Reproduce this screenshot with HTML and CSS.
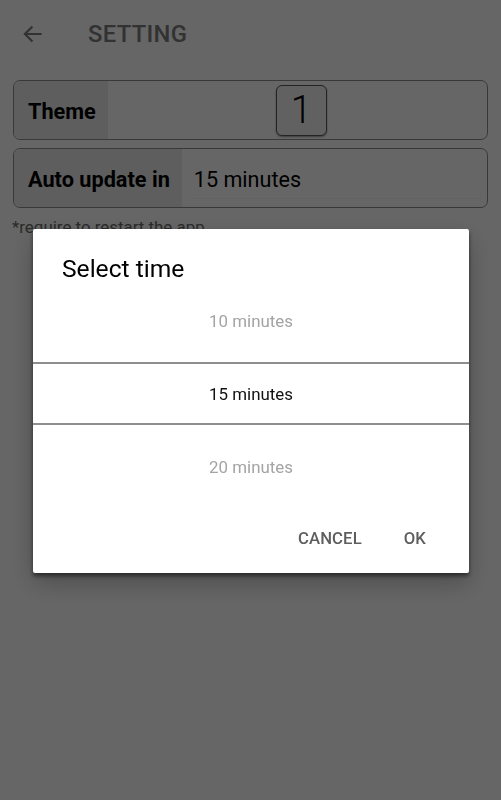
FILE: index.html
```html
<!DOCTYPE html>
<html lang="en">
    <head>
        <title>Setting</title>
        <meta charset="UTF-8">
        <meta name="viewport" content="width=device-width, initial-scale=1">
        <link rel="stylesheet" href="styles.css">
    </head>
    <body>

        <div class="screen">
            <header class="toolbar">
                <svg class="back" viewBox="0 0 24 24" width="24" height="24">
                    <path d="M20 12H4.5M11.5 5l-7 7 7 7" fill="none" stroke="currentColor" stroke-width="2"/>
                </svg>
                <h1>SETTING</h1>
            </header>

            <div class="row">
                <div class="label">Theme</div>
                <div class="value value-center">
                    <button class="theme-btn">1</button>
                </div>
            </div>

            <div class="row">
                <div class="label">Auto update in</div>
                <div class="value"><span class="field">15 minutes</span></div>
            </div>

            <p class="note">*require to restart the app</p>
        </div>

        <!-- dim layer + picker dialog -->
        <div class="scrim">
            <div class="dialog">
                <h2>Select time</h2>
                <div class="picker">
                    <div class="item">10 minutes</div>
                    <div class="item selected">15 minutes</div>
                    <div class="item">20 minutes</div>
                </div>
                <div class="actions">
                    <button>CANCEL</button>
                    <button>OK</button>
                </div>
            </div>
        </div>

    </body>
</html>
```

FILE: styles.css
```css
html {
    box-sizing: border-box;
}
*, *::before, *::after {
    box-sizing: inherit;
}
body {
    margin: 0;
    width: 501px;
    height: 800px;
    font-family: Roboto, "Noto Sans", sans-serif;
    background: #fff;
    overflow: hidden;
}
.screen {
    padding: 0 13px 0 13px;
}
.toolbar {
    height: 68px;
    display: flex;
    align-items: center;
    margin: 0 -13px 12px;
    padding-left: 20px;
    color: #7e7e7e;
}
    .toolbar .back {
        width: 26px;
        height: 26px;
        margin-right: 42px;
        margin-top: -1px;
    }
    .toolbar h1 {
        margin: 0;
        font-size: 23.8px;
        font-weight: 500;
        letter-spacing: .3px;
    }

.row {
    height: 60px;
    display: flex;
    border: 1px solid #8e8e8e;
    border-radius: 7px;
    overflow: hidden;
    margin-bottom: 8px;
}
    .row .label {
        display: flex;
        align-items: center;
        padding: 2px 12px 0 14px;
        background: #ececec;
        font-size: 21.7px;
        font-weight: 700;
        color: #000;
    }
    .row .value {
        flex: 1;
        display: flex;
        align-items: center;
        padding: 0 6px 0 12px;
    }
    .row .value-center {
        justify-content: center;
        padding: 0 0 0 8px;
    }
    .row .field {
        flex: 1;
        font-size: 21.6px;
        color: #000;
        padding-top: 2px;
        padding-bottom: 6px;
        margin-top: 7px;
        border-bottom: 1px solid #f4f4f4;
    }
.theme-btn {
    width: 51px;
    height: 51px;
    padding: 0;
    border: 1.5px solid #5a5a5a;
    border-radius: 6px;
    background: #f2f2f2;
    font-family: Roboto, sans-serif;
    font-size: 38px;
    font-weight: 300;
    color: #000;
    box-shadow: 0 1px 2px rgba(0, 0, 0, .4);
}
.note {
    margin: 9px 0 0 -1px;
    font-size: 16.9px;
    color: #6b6b6b;
}

.scrim {
    position: fixed;
    inset: 0;
    background: rgba(0, 0, 0, .6);
}
.dialog {
    position: absolute;
    top: 229px;
    left: 33px;
    width: 436px;
    height: 344px;
    background: #fff;
    border-radius: 2px;
    box-shadow: 0 3px 4px rgba(0, 0, 0, .5), 0 10px 24px rgba(0, 0, 0, .25);
    display: flex;
    flex-direction: column;
}
    .dialog h2 {
        margin: 0;
        padding: 25px 0 0 29px;
        height: 55px;
        font-size: 24.6px;
        font-weight: 400;
        color: #000;
    }
    .picker {
        display: flex;
        flex-direction: column;
    }
        .picker .item {
            height: 73px;
            display: flex;
            align-items: center;
            justify-content: center;
            font-size: 16.9px;
            color: #a4a4a4;
            position: relative;
        }
        .picker .selected {
            color: #111;
        }
        .picker .selected::before,
        .picker .selected::after {
            content: '';
            position: absolute;
            left: 0;
            right: 0;
            height: 2px;
            background: #8e8e8e;
        }
        .picker .selected::before { top: 5px; }
        .picker .selected::after { bottom: 5px; }
    .actions {
        display: flex;
        justify-content: flex-end;
        gap: 20px;
        padding: 18px 32px 0 0;
    }
        .actions button {
            border: none;
            background: none;
            padding: 8px 11px;
            font-family: Roboto, sans-serif;
            font-size: 16.7px;
            font-weight: 500;
            color: #5e5e5e;
            letter-spacing: .1px;
        }
```
